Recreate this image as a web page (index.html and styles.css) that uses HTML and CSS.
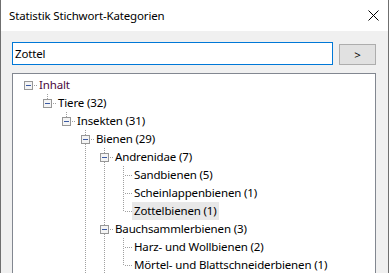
FILE: index.html
```html
<!DOCTYPE html>
<html>
<head>
<meta charset="utf-8">
<link rel="stylesheet" href="styles.css">
</head>
<body>
<div class="win">
  <div class="titlebar">
    <span class="title">Statistik Stichwort-Kategorien</span>
    <svg class="close" width="11" height="11" viewBox="0 0 11 11"><path d="M0.5 0.5 L10.5 10.5 M10.5 0.5 L0.5 10.5" stroke="#000" stroke-width="1" fill="none"/></svg>
  </div>
  <div class="content">
    <div class="searchrow">
      <div class="search">Zottel</div>
      <div class="btn">&gt;</div>
    </div>
    <div class="tree">
      <div class="row"><span class="cell r"><i class="box"></i></span><span class="label root">Inhalt</span></div>
      <div class="row"><span class="cell"></span><span class="cell l"><i class="box"></i></span><span class="label">Tiere (32)</span></div>
      <div class="row"><span class="cell"></span><span class="cell"></span><span class="cell l"><i class="box"></i></span><span class="label">Insekten (31)</span></div>
      <div class="row"><span class="cell"></span><span class="cell"></span><span class="cell"></span><span class="cell t"><i class="box"></i></span><span class="label">Bienen (29)</span></div>
      <div class="row"><span class="cell"></span><span class="cell"></span><span class="cell"></span><span class="cell v"></span><span class="cell t"><i class="box"></i></span><span class="label">Andrenidae (7)</span></div>
      <div class="row"><span class="cell"></span><span class="cell"></span><span class="cell"></span><span class="cell v"></span><span class="cell v"></span><span class="cell t"></span><span class="label">Sandbienen (5)</span></div>
      <div class="row"><span class="cell"></span><span class="cell"></span><span class="cell"></span><span class="cell v"></span><span class="cell v"></span><span class="cell t"></span><span class="label">Scheinlappenbienen (1)</span></div>
      <div class="row"><span class="cell"></span><span class="cell"></span><span class="cell"></span><span class="cell v"></span><span class="cell v"></span><span class="cell l"></span><span class="label sel">Zottelbienen (1)</span></div>
      <div class="row"><span class="cell"></span><span class="cell"></span><span class="cell"></span><span class="cell v"></span><span class="cell t"><i class="box"></i></span><span class="label">Bauchsammlerbienen (3)</span></div>
      <div class="row"><span class="cell"></span><span class="cell"></span><span class="cell"></span><span class="cell v"></span><span class="cell v"></span><span class="cell t"></span><span class="label">Harz- und Wollbienen (2)</span></div>
      <div class="row"><span class="cell"></span><span class="cell"></span><span class="cell"></span><span class="cell v"></span><span class="cell v"></span><span class="cell l"></span><span class="label">Mörtel- und Blattschneiderbienen (1)</span></div>
      <div class="row"><span class="cell"></span><span class="cell"></span><span class="cell"></span><span class="cell v"></span><span class="cell v"></span></div>
    </div>
  </div>
</div>
</body>
</html>
```
FILE: styles.css
```css
body {
  margin: 0;
  font-family: "Noto Sans", "Open Sans", sans-serif;
  font-size: 11.5px;
  letter-spacing: -0.15px;
  color: #000;
}
.win {
  width: 389px;
  height: 273px;
  box-sizing: border-box;
  border-left: 1px solid #6f6f6f;
  border-right: 1px solid #6f6f6f;
  background: #f0f0f0;
  overflow: hidden;
  display: flex;
  flex-direction: column;
}
.titlebar {
  height: 31px;
  flex: none;
  background: #fff;
  display: flex;
  align-items: center;
  justify-content: space-between;
  padding: 0 9px 0 8px;
}
.title {
  font-size: 11.5px;
}
.close {
  display: block;
  margin-top: -1px;
}
.content {
  flex: 1;
  min-height: 0;
  display: flex;
  flex-direction: column;
  gap: 8px;
  padding: 11px 0 0 11px;
}
.searchrow {
  display: flex;
  align-items: flex-end;
  gap: 6px;
}
.search {
  width: 321px;
  height: 23px;
  box-sizing: border-box;
  border: 1px solid #0078d7;
  background: #fff;
  padding: 0 2px;
  display: flex;
  align-items: center;
}
.btn {
  width: 37px;
  height: 21px;
  box-sizing: border-box;
  border: 1px solid #adadad;
  background: #e1e1e1;
  display: flex;
  align-items: center;
  justify-content: center;
}
.tree {
  width: 364px;
  flex: 1;
  box-sizing: border-box;
  border: 1px solid #828790;
  border-bottom: none;
  background: #fff;
  padding: 2px 0 0 6px;
  overflow: hidden;
}
.row {
  display: flex;
  height: 18px;
}
.cell {
  width: 19px;
  height: 18px;
  flex: none;
  position: relative;
}
.cell.v::before,
.cell.t::before,
.cell.l::before {
  content: "";
  position: absolute;
  left: 9px;
  top: 0;
  width: 1px;
  height: 18px;
  background: repeating-linear-gradient(to bottom, #a0a0a0 0 1px, transparent 1px 2px);
}
.cell.l::before {
  height: 9px;
}
.cell.t::after,
.cell.l::after,
.cell.r::after {
  content: "";
  position: absolute;
  left: 10px;
  top: 9px;
  width: 9px;
  height: 1px;
  background: repeating-linear-gradient(to right, transparent 0 1px, #a0a0a0 1px 2px);
}
.box {
  position: absolute;
  left: 5px;
  top: 5px;
  width: 9px;
  height: 9px;
  box-sizing: border-box;
  border: 1px solid #979797;
  background: #f4f4f4;
  z-index: 1;
}
.box::after {
  content: "";
  position: absolute;
  left: 1px;
  top: 3px;
  width: 5px;
  height: 1px;
  background: #3b5aa3;
}
.label {
  margin-left: -1px;
  padding: 0 2px;
  line-height: 18px;
  height: 18px;
  white-space: nowrap;
}
.label.root {
  color: #4a0840;
}
.label.sel {
  background: #e8e8e8;
}
```
